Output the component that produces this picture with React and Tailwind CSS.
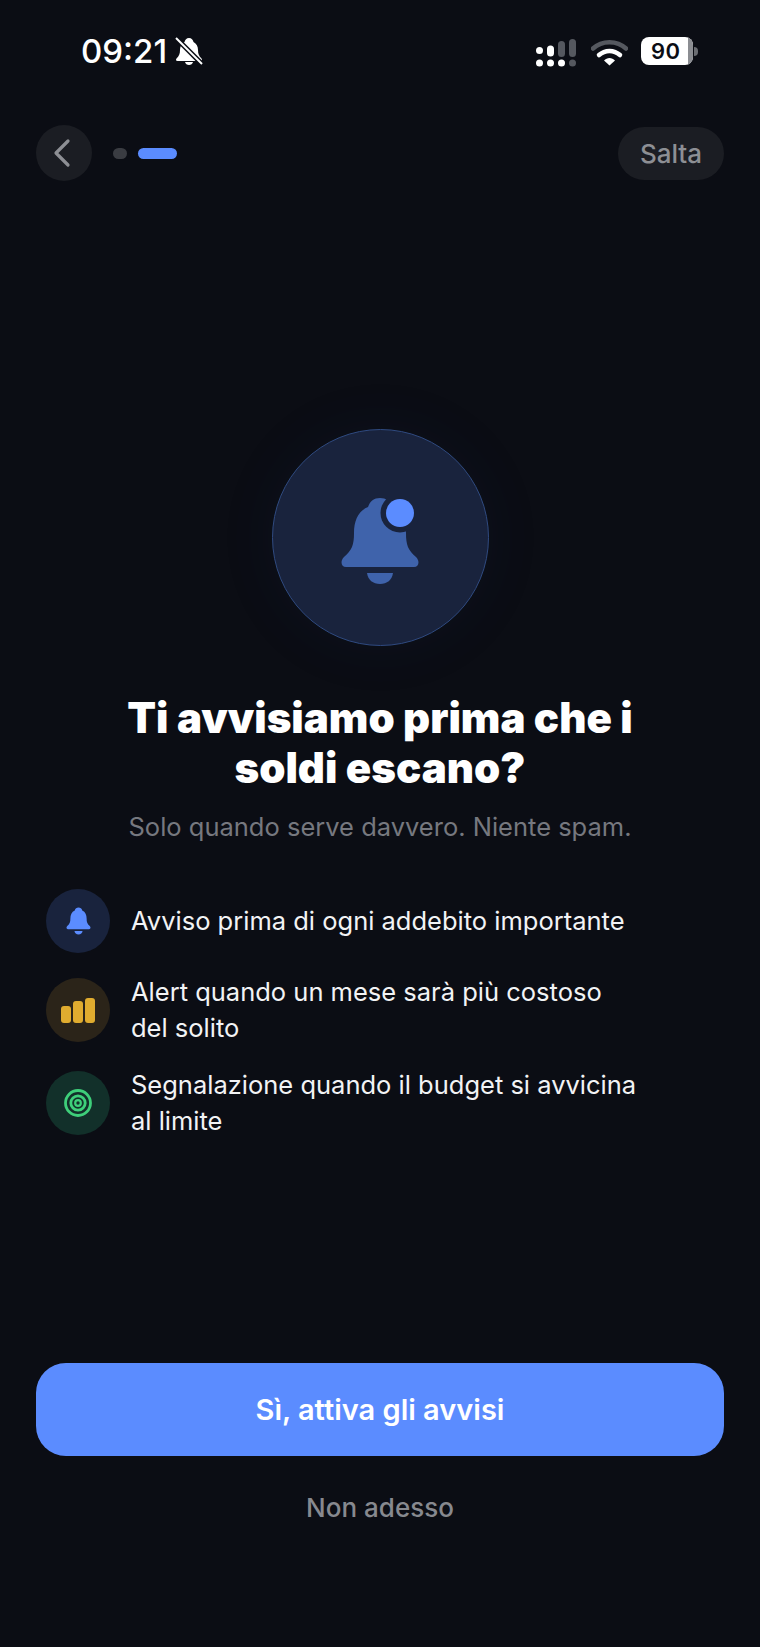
const FONT = { fontFamily: "Inter, 'Liberation Sans', sans-serif" };

function Bell({ className }) {
  return (
    <svg viewBox="0 0 80 88" className={className} fill="currentColor">
      <path d="M40 1C34 1 30 4 28 10C18 14 14 24 14 36C14 48 12 53 4 60C0 64 1 70 6 70H74C79 70 80 64 76 60C68 53 66 48 66 36C66 24 62 14 52 10C50 4 46 1 40 1Z" />
      <path d="M27 76H53C52 83 47 87 40 87C33 87 28 83 27 76Z" />
    </svg>
  );
}

function StatusBar() {
  return (
    <div className="flex h-[102px] items-center justify-between pl-[81px] pr-[62px]">
      <div className="flex items-center gap-[8px]">
        <span className="text-[33px] font-medium leading-none text-white">09:21</span>
        <svg viewBox="0 0 28 28" className="h-[28px] w-[28px] text-white" fill="currentColor">
          <path d="M14 1C11.5 1 10 3 9.5 5C6.500 6.500 5 9.500 5 13C5 17 4 19 1.500 21.500C0.500 23 1 24 2.500 24H25.500C27 24 27.500 23 26.500 21.500C24 19 23 17 23 13C23 9.500 21.500 6.500 18.500 5C18 3 16.500 1 14 1Z" />
          <path d="M10 25H18C17.500 27 16 28 14 28C12 28 10.500 27 10 25Z" />
          <path d="M1 1L27 27" stroke="#0b0d14" strokeWidth="5" />
          <path d="M1 1L27 27" stroke="white" strokeWidth="2" />
        </svg>
      </div>
      <div className="flex items-center gap-[13px]">
        <svg viewBox="0 0 40 30" className="mr-[2px] mt-[5px] h-[30px] w-[40px]">
          <g fill="#ffffff">
            <circle cx="3.500" cy="11.500" r="3.500" />
            <circle cx="3.500" cy="24" r="3.500" />
            <rect x="11" y="6.500" width="7" height="11" rx="3.500" />
            <circle cx="14.500" cy="24" r="3.500" />
            <circle cx="25.500" cy="24" r="3.500" />
          </g>
          <g fill="#55585f">
            <rect x="22" y="2" width="7" height="16" rx="3.500" />
            <rect x="33" y="0" width="7" height="18" rx="3.500" />
            <circle cx="36.500" cy="24" r="3.500" />
          </g>
        </svg>
        <svg viewBox="0 0 37 29" className="h-[29px] w-[37px]">
          <path d="M2 11.500C11 3 26 3 35 11.500" fill="none" stroke="#55585f" strokeWidth="4.500" strokeLinecap="round" />
          <path d="M8 18C14 12.500 23 12.500 29 18" fill="none" stroke="#ffffff" strokeWidth="4.500" strokeLinecap="round" />
          <path d="M13 23.500C16 20 21 20 24 23.500L18.500 28.500Z" fill="#ffffff" />
        </svg>
        <div className="flex items-center gap-[1px]">
          <div className="relative flex h-[28px] w-[52px] items-center overflow-hidden rounded-[8px] bg-white pl-[10px]">
            <span className="text-[22px] font-semibold leading-none tracking-[0.5px] text-[#0b0d14]">90</span>
            <div className="absolute right-0 top-0 h-full w-[5px] bg-[#8b8d92]" />
          </div>
          <div className="h-[9px] w-[4px] rounded-r-full bg-[#6b6d72]" />
        </div>
      </div>
    </div>
  );
}

function Header() {
  return (
    <div className="flex items-center justify-between px-[36px] pt-[23px]">
      <div className="flex items-center gap-[21px]">
        <button className="flex h-[56px] w-[56px] items-center justify-center rounded-full bg-[#1b1d23]">
          <svg viewBox="0 0 20 30" className="mr-[4px] h-[30px] w-[20px]" fill="none" stroke="#8d8f94" strokeWidth="3.200" strokeLinecap="round" strokeLinejoin="round">
            <path d="M16 3L4 15L16 27" />
          </svg>
        </button>
        <div className="flex items-center gap-[11px]">
          <div className="h-[11px] w-[14px] rounded-full bg-[#3a3c42]" />
          <div className="h-[11px] w-[39px] rounded-full bg-[#5b8cff]" />
        </div>
      </div>
      <button className="flex h-[53px] w-[106px] items-center justify-center rounded-full bg-[#1b1d23] text-[26px] font-medium text-[#8d8f94]">
        Salta
      </button>
    </div>
  );
}

function Hero() {
  return (
    <div className="mt-[248px] flex justify-center">
      <div className="relative flex h-[217px] w-[217px] items-center justify-center rounded-full border-[1.5px] border-[#2f4a80] bg-[#19233d] pt-[6px] shadow-[0_0_60px_rgba(40,70,140,0.08)]">
        <svg viewBox="0 0 80 88" className="h-[88px] w-[80px]">
          <path fill="#3f63ab" d="M40 1C34 1 30 4 28 10C18 14 14 24 14 36C14 48 12 53 4 60C0 64 1 70 6 70H74C79 70 80 64 76 60C68 53 66 48 66 36C66 24 62 14 52 10C50 4 46 1 40 1Z" />
          <path fill="#3f63ab" d="M27 76H53C52 83 47 87 40 87C33 87 28 83 27 76Z" />
          <circle cx="60" cy="16" r="19.500" fill="#19233d" />
          <circle cx="60" cy="16" r="14" fill="#5b8cff" />
        </svg>
      </div>
    </div>
  );
}

function Row({ bg, icon, children }) {
  return (
    <div className="flex items-center gap-[21px]">
      <div className={`flex h-[64px] w-[64px] shrink-0 items-center justify-center rounded-full ${bg}`}>{icon}</div>
      <p className="text-[25.5px] leading-[36px] text-[#f2f3f5]">{children}</p>
    </div>
  );
}

export default function App() {
  return (
    <div className="flex h-[1647px] w-[760px] flex-col overflow-hidden bg-[#0b0d14]" style={FONT}>
      <StatusBar />
      <Header />
      <Hero />
      <h1 className="mt-[47px] text-center text-[42px] font-black leading-[49.5px] text-white">
        Ti avvisiamo prima che i
        <br />
        soldi escano?
      </h1>
      <p className="mt-[17px] text-center text-[25.5px] leading-[36px] text-[#76787f]">Solo quando serve davvero. Niente spam.</p>
      <div className="mt-[44px] flex flex-col gap-[21px] pl-[46px] pr-[120px]">
        <Row bg="bg-[#19233d]" icon={<Bell className="h-[28px] w-[25px] text-[#5b8cff]" />}>
          Avviso prima di ogni addebito importante
        </Row>
        <Row
          bg="bg-[#2b2419]"
          icon={
            <div className="flex items-end gap-[2px]">
              <div className="h-[17px] w-[10px] rounded-[3px] bg-[#e0ac2f]" />
              <div className="h-[22px] w-[10px] rounded-[3px] bg-[#e0ac2f]" />
              <div className="h-[25px] w-[10px] rounded-[3px] bg-[#e0ac2f]" />
            </div>
          }
        >
          Alert quando un mese sarà più costoso del solito
        </Row>
        <Row
          bg="bg-[#12302a]"
          icon={
            <svg viewBox="0 0 28 28" className="h-[28px] w-[28px]" fill="none" stroke="#3ecf7a" strokeWidth="2.800">
              <circle cx="14" cy="14" r="12.500" />
              <circle cx="14" cy="14" r="7.200" />
              <circle cx="14" cy="14" r="2.800" strokeWidth="2.200" />
            </svg>
          }
        >
          Segnalazione quando il budget si avvicina al limite
        </Row>
      </div>
      <div className="mt-auto px-[36px] pb-[123px]">
        <button className="flex h-[93px] w-full items-center justify-center rounded-[30px] bg-[#5b8cff] text-[29px] font-semibold text-white">
          Sì, attiva gli avvisi
        </button>
        <div className="mt-[36px] text-center text-[26px] font-medium leading-[32px] text-[#87898f]">Non adesso</div>
      </div>
    </div>
  );
}
